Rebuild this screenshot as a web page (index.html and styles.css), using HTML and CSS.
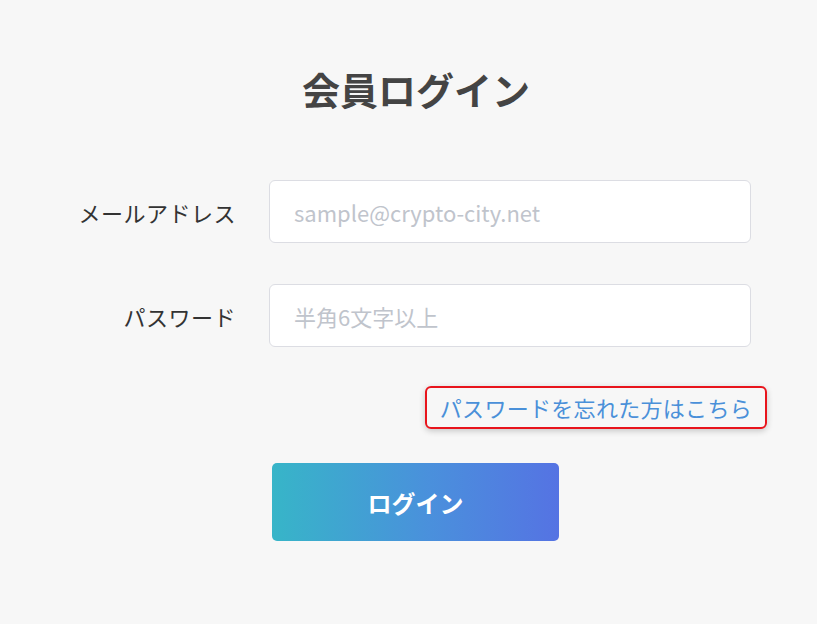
FILE: index.html
```html
<!DOCTYPE html>
<html lang="ja">
<head>
<meta charset="utf-8">
<link rel="stylesheet" href="styles.css">
</head>
<body>
<main class="page">
  <h1 class="title">会員ログイン</h1>
  <form class="form">
    <div class="row">
      <label class="label" for="email">メールアドレス</label>
      <input class="input" id="email" type="text" placeholder="sample@crypto-city.net">
    </div>
    <div class="row">
      <label class="label" for="pw">パスワード</label>
      <input class="input" id="pw" type="password" placeholder="半角6文字以上">
    </div>
    <div class="link-row">
      <a class="forgot" href="#">パスワードを忘れた方はこちら</a>
    </div>
    <div class="btn-row">
      <button class="btn" type="button">ログイン</button>
    </div>
  </form>
</main>
</body>
</html>
```
FILE: styles.css
```css
html, body {
  margin: 0;
  padding: 0;
  background: #f7f7f7;
  font-family: "Noto Sans CJK JP", "Noto Sans", sans-serif;
}
.page {
  width: 817px;
  height: 624px;
  box-sizing: border-box;
  padding-top: 62px;
}
.title {
  margin: 0;
  text-align: center;
  font-size: 38px;
  line-height: 54px;
  font-weight: 700;
  color: #444444;
  padding-left: 15px;
}
.form {
  margin-top: 64px;
  display: flex;
  flex-direction: column;
}
.row {
  display: grid;
  grid-template-columns: 236px 482px;
  column-gap: 33px;
  align-items: center;
  margin-bottom: 41px;
}
.row:nth-child(2) { margin-bottom: 39px; }
.label {
  text-align: right;
  font-size: 22px;
  color: #333333;
  letter-spacing: 0.5px;
}
.input {
  box-sizing: border-box;
  height: 63px;
  width: 482px;
  border: 1px solid #dcdde3;
  border-radius: 6px;
  background: #ffffff;
  padding: 0 24px;
  font-family: "Noto Sans CJK JP", "Noto Sans", sans-serif;
  font-size: 22px;
  color: #333;
  outline: none;
}
.input::placeholder {
  color: #c0c4cc;
}
.link-row {
  display: flex;
  justify-content: flex-end;
  padding-right: 50px;
}
.forgot {
  display: block;
  box-sizing: border-box;
  height: 43px;
  padding: 0 13px 0 13px;
  border: 2px solid #e8141c;
  border-radius: 6px;
  box-shadow: 0 2px 6px rgba(0,0,0,0.2);
  color: #4a90d9;
  font-size: 22px;
  line-height: 38px;
  text-decoration: none;
  letter-spacing: 0.3px;
}
.btn-row {
  margin-top: 34px;
  padding-left: 272px;
}
.btn {
  width: 287px;
  height: 78px;
  border: none;
  border-radius: 5px;
  background: linear-gradient(90deg, #37b5c8 0%, #4a90dc 55%, #5573e3 100%);
  color: #ffffff;
  font-family: "Noto Sans CJK JP", "Noto Sans", sans-serif;
  font-size: 24px;
  font-weight: 700;
  cursor: pointer;
}
```
